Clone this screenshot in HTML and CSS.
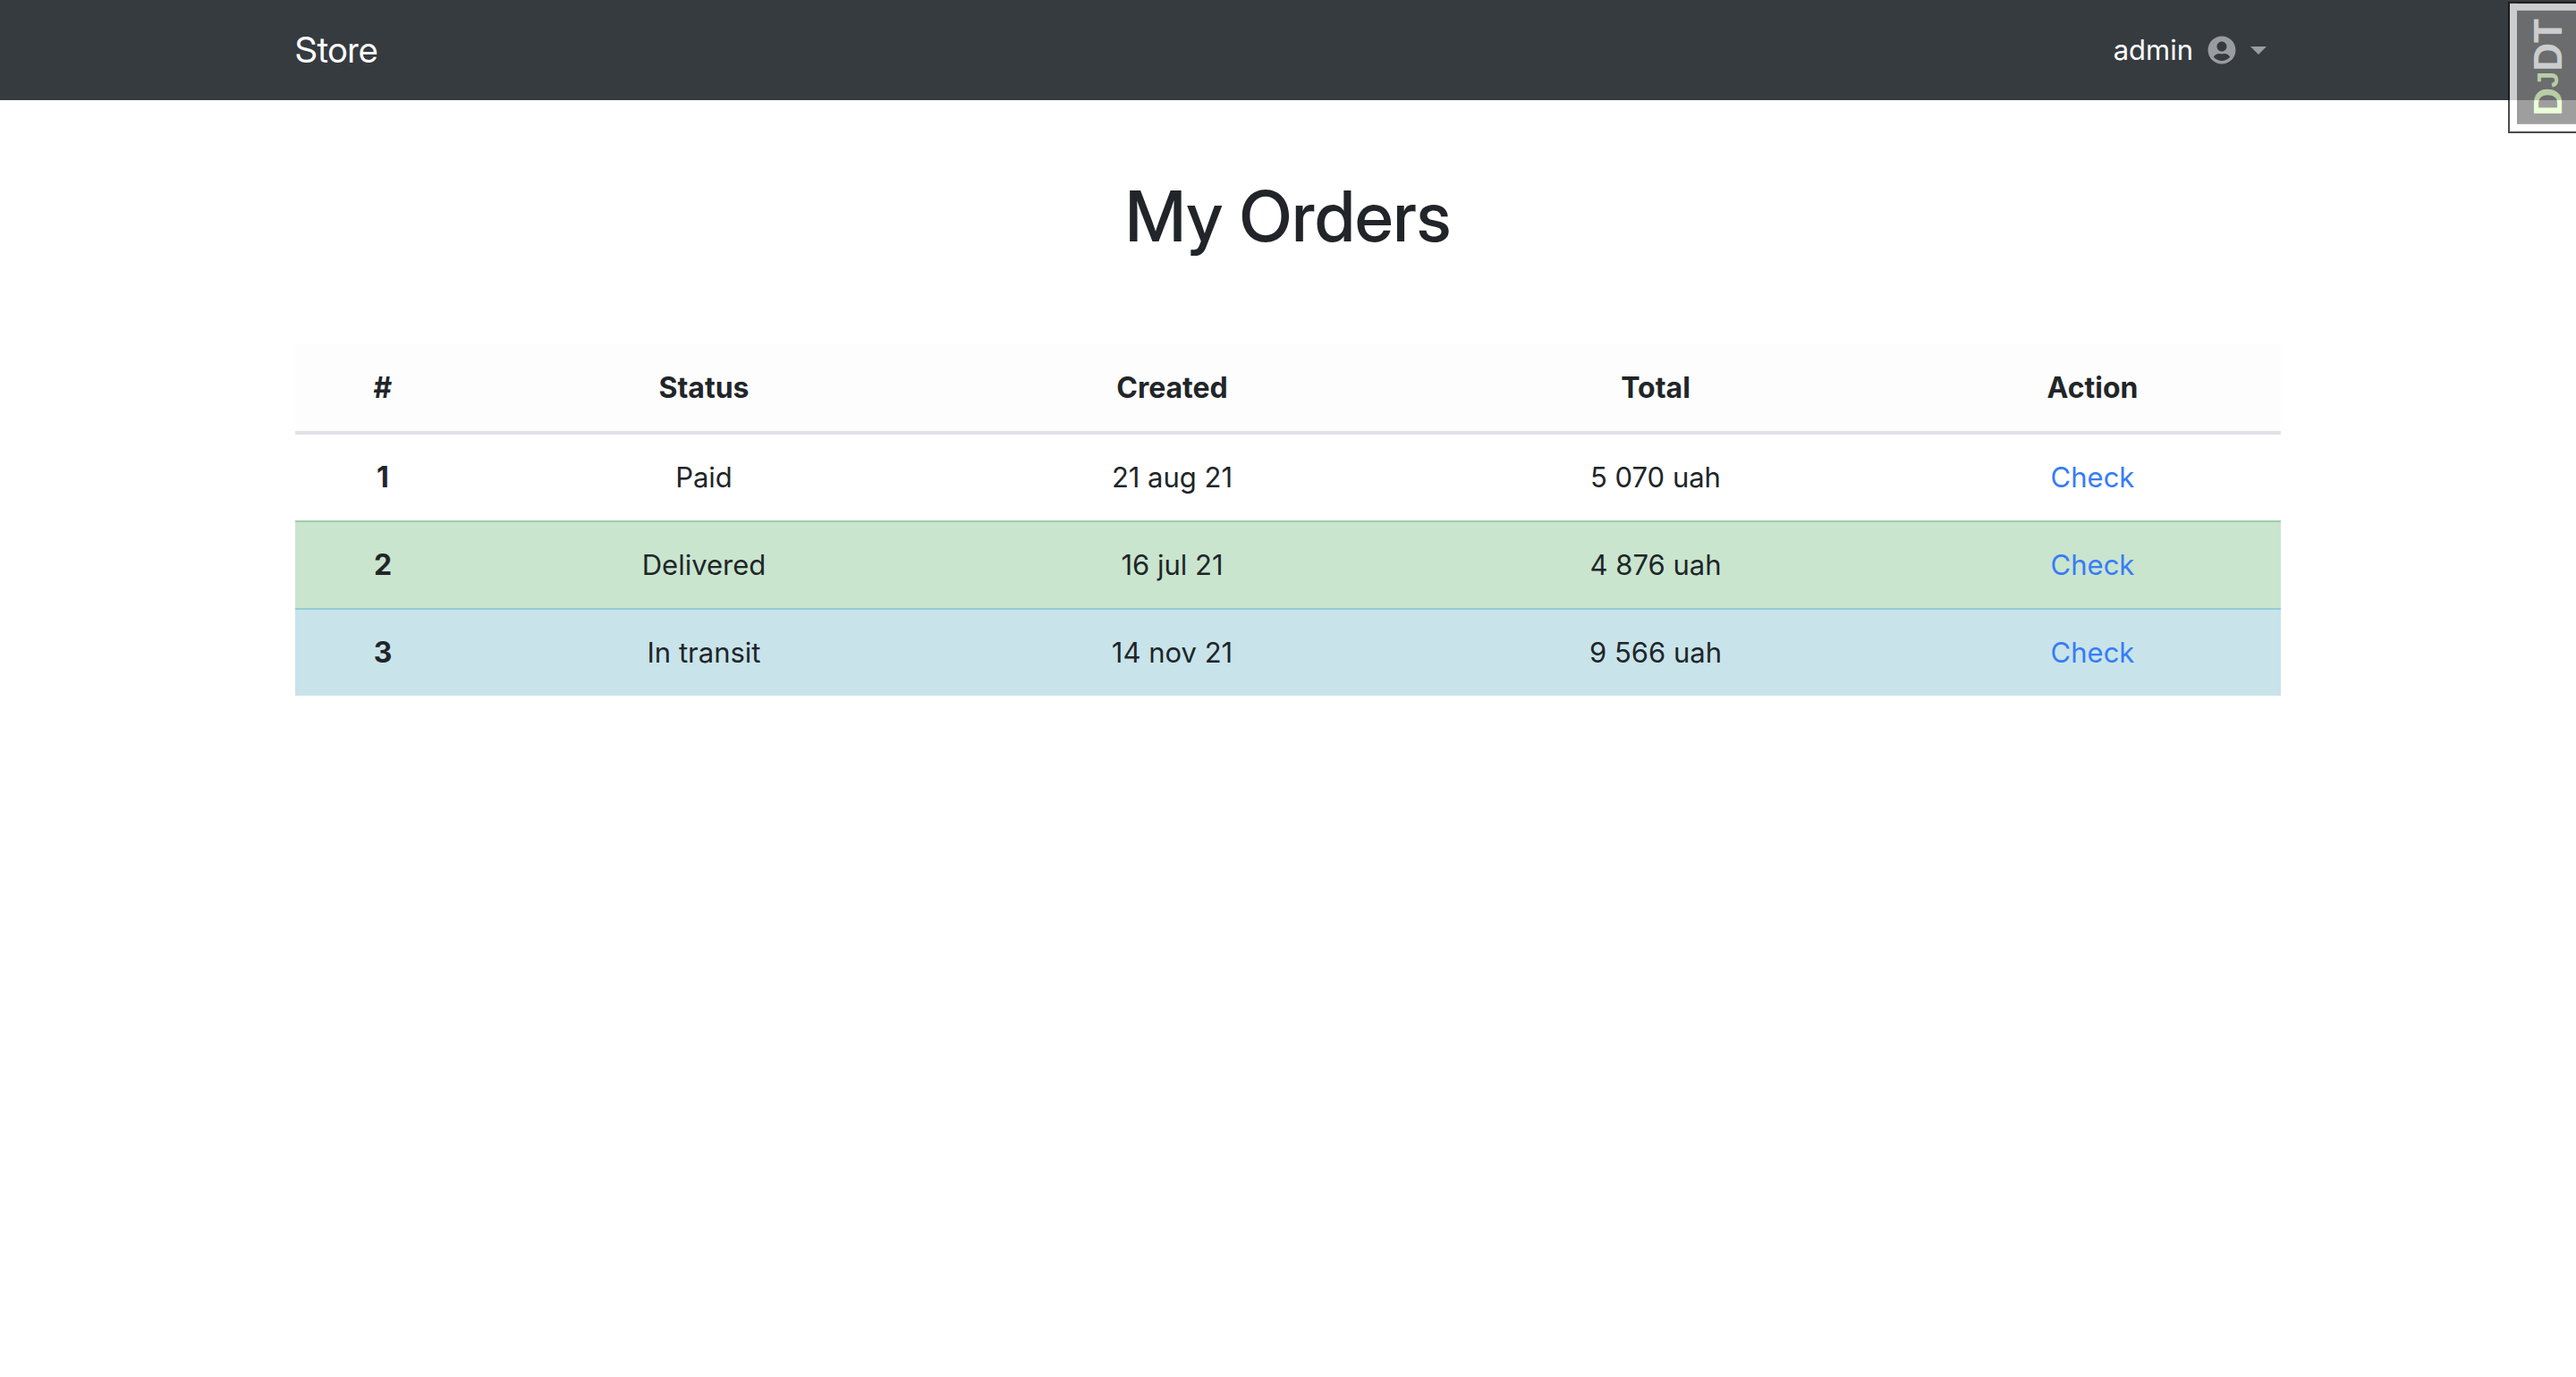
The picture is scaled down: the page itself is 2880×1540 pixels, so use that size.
FILE: index.html
```html
<!DOCTYPE html>
<html lang="en">
<head>
  <meta charset="utf-8">
  <meta name="viewport" content="width=device-width, initial-scale=1">
  <title>My Orders</title>
  <link rel="stylesheet" href="styles.css">
</head>
<body>
  <header class="navbar">
    <nav class="container navbar-inner">
      <a class="brand" href="#">Store</a>
      <button class="user-menu" type="button" aria-haspopup="true">
        <span class="user-name">admin</span>
        <svg class="user-icon" viewBox="0 0 496 512" aria-hidden="true"><path fill="currentColor" d="M248 8C111 8 0 119 0 256s111 248 248 248 248-111 248-248S385 8 248 8zm0 96c48.600 0 88 39.400 88 88s-39.400 88-88 88-88-39.400-88-88 39.400-88 88-88zm0 344c-58.700 0-111.300-26.600-146.500-68.200 18.800-35.400 55.600-59.800 98.500-59.800 2.400 0 4.800.4 7.100 1.100 13 4.200 26.600 6.900 40.900 6.900 14.300 0 28-2.700 40.900-6.900 2.300-.7 4.700-1.100 7.100-1.100 42.900 0 79.700 24.400 98.500 59.800C359.300 421.400 306.700 448 248 448z"/></svg>
        <span class="caret"></span>
      </button>
    </nav>
  </header>

  <main class="container">
    <h1 class="title">My Orders</h1>
    <table class="orders">
      <colgroup>
        <col class="col-number">
        <col class="col-status">
        <col class="col-created">
        <col class="col-total">
        <col class="col-action">
      </colgroup>
      <thead>
        <tr>
          <th scope="col">#</th>
          <th scope="col">Status</th>
          <th scope="col">Created</th>
          <th scope="col">Total</th>
          <th scope="col">Action</th>
        </tr>
      </thead>
      <tbody>
        <tr>
          <th scope="row">1</th>
          <td>Paid</td>
          <td>21 aug 21</td>
          <td>5 070 uah</td>
          <td><a href="#">Check</a></td>
        </tr>
        <tr class="row-success">
          <th scope="row">2</th>
          <td>Delivered</td>
          <td>16 jul 21</td>
          <td>4 876 uah</td>
          <td><a href="#">Check</a></td>
        </tr>
        <tr class="row-info">
          <th scope="row">3</th>
          <td>In transit</td>
          <td>14 nov 21</td>
          <td>9 566 uah</td>
          <td><a href="#">Check</a></td>
        </tr>
      </tbody>
    </table>
  </main>

  <div class="debug-handle">
    <button class="debug-button" type="button"><span class="debug-d">D</span><span class="debug-j">J</span>DT</button>
  </div>
</body>
</html>
```
FILE: styles.css
```css
* {
  box-sizing: border-box;
}

body {
  margin: 0;
  background: #fff;
  color: #212529;
  font-family: Inter, "Liberation Sans", sans-serif;
  font-size: 31px;
  line-height: 48px;
}

a {
  color: #377cf6;
  text-decoration: none;
}

.container {
  max-width: 2280px;
  margin: 0 auto;
  padding: 0 30px;
}

/* Navigation */
.navbar {
  background: #363b3f;
}

.navbar-inner {
  display: flex;
  align-items: center;
  justify-content: space-between;
  min-height: 112px;
}

.brand {
  color: #fff;
  font-family: "Inter Display", Inter, "Liberation Sans", sans-serif;
  font-size: 40px;
}

.user-menu {
  display: flex;
  align-items: center;
  gap: 16px;
  padding: 0 16px;
  border: 0;
  background: none;
  color: #9a9d9f;
  font: inherit;
}

.user-name {
  color: #fff;
}

.user-icon {
  width: 32px;
  height: 32px;
}

.caret {
  border: 9px solid transparent;
  border-top-color: currentColor;
  border-bottom: 0;
}

/* Orders */
.title {
  margin: 0;
  padding: 82px 0 94px;
  font-family: "Inter Display", Inter, "Liberation Sans", sans-serif;
  font-size: 78px;
  font-weight: 500;
  line-height: 96px;
  text-align: center;
}

.orders {
  width: 100%;
  table-layout: fixed;
  border-spacing: 0;
  text-align: center;
}

.col-number {
  width: 196px;
}

.col-status {
  width: 522px;
}

.col-created {
  width: 525px;
}

.col-total {
  width: 556px;
}

.col-action {
  width: 421px;
}

.orders th,
.orders td {
  padding: 24px;
}

.orders th {
  font-size: 32px;
}

.orders thead th {
  padding-top: 26px;
  border-bottom: 4px solid #dfe2e7;
  background: #fdfdfd;
}

.row-success > * {
  border-top: 2px solid #9fcea7;
  background: #c9e5ce;
}

.row-info > * {
  border-top: 2px solid #98cad6;
  background: #c8e4ea;
}

/* Debug toolbar handle */
.debug-handle {
  position: fixed;
  top: 2px;
  right: 0;
  border: 2px solid #111;
  border-right: 0;
  background: #fff;
  opacity: 0.75;
}

.debug-button {
  display: block;
  padding: 9px 4px 9px 0;
  border: 8px solid #fff;
  border-left: 0;
  background: #000;
  color: #fff;
  font: bold 44px/62px "Liberation Sans", sans-serif;
  opacity: 0.5;
  writing-mode: vertical-rl;
  transform: rotate(180deg);
}

.debug-d {
  color: #cf9;
}

.debug-j {
  color: #cf9;
  font-size: 33px;
}
```
